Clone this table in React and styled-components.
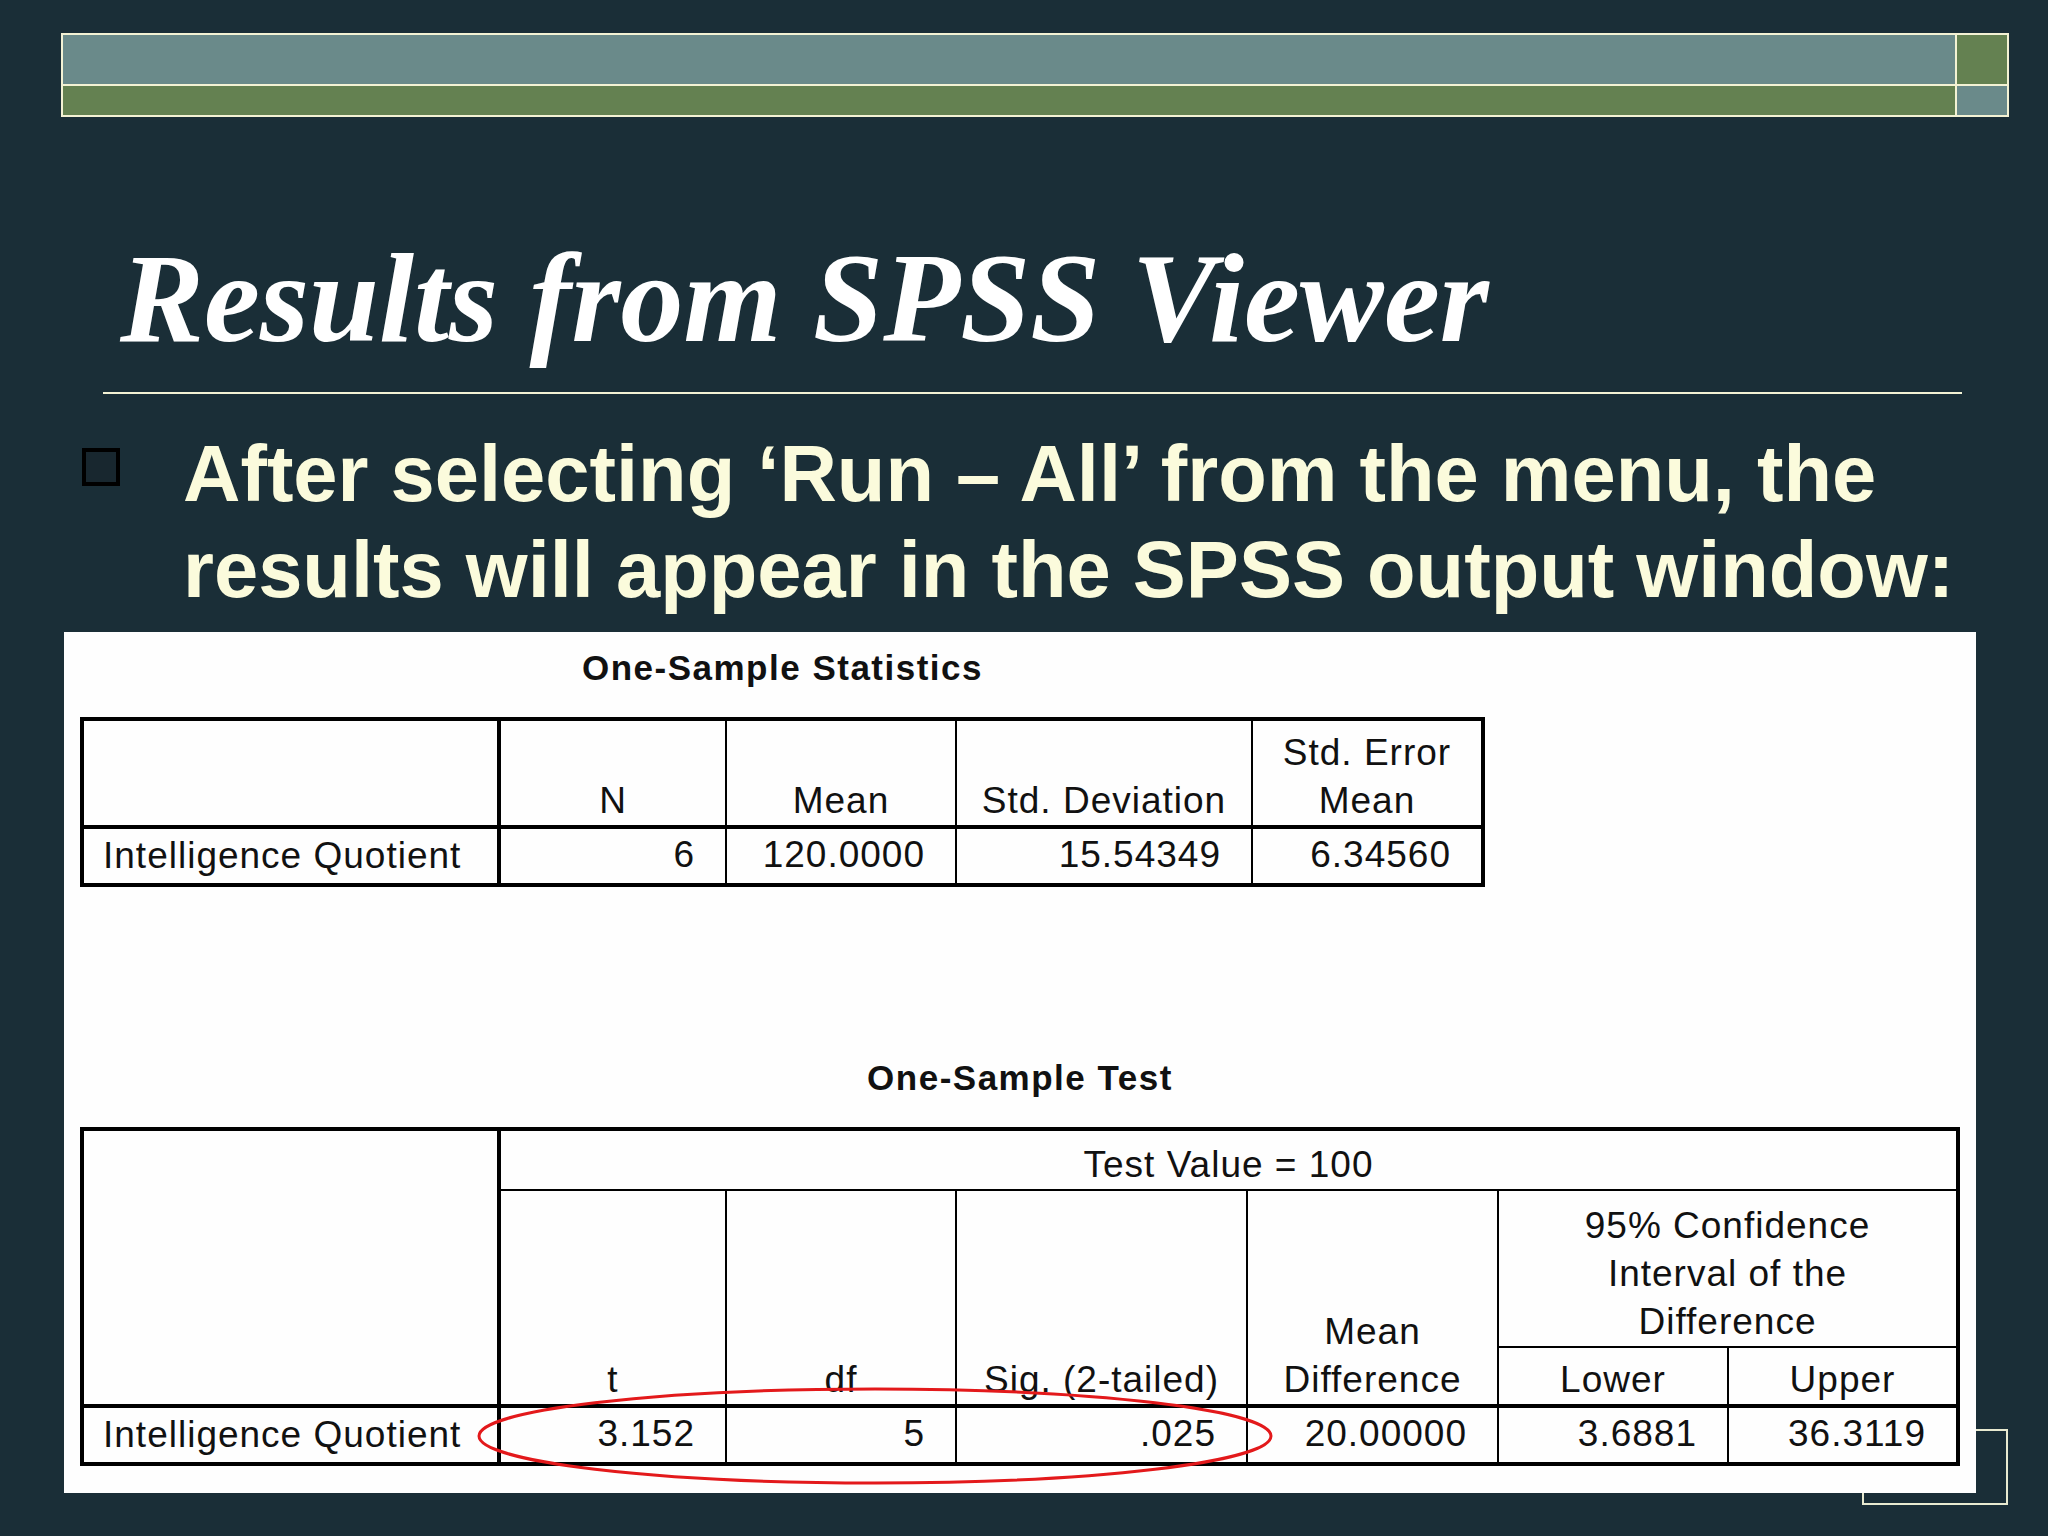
import React from 'react';
import styled, { createGlobalStyle } from 'styled-components';

const GlobalStyle = createGlobalStyle`
  html, body {
    margin: 0;
    padding: 0;
    background: #1a2e37;
  }
`;

const Slide = styled.div`
  position: relative;
  width: 2048px;
  height: 1536px;
  overflow: hidden;
  background: #1a2e37;
`;

const Banner = styled.div`
  box-sizing: border-box;
  margin: 33px 0 0 61px;
  width: 1948px;
  display: grid;
  grid-template-columns: 1fr 50px;
  grid-template-rows: 49px 29px;
  gap: 2px;
  padding: 2px;
  background: #f3f2d4;
`;

const Stripe = styled.div`
  background: ${props => (props.green ? '#648151' : '#6a8a8a')};
`;

const Title = styled.h1`
  margin: 105px 0 0 120px;
  font-family: "Liberation Serif", "Times New Roman", serif;
  font-style: italic;
  font-weight: 700;
  font-size: 126px;
  line-height: 154px;
  color: #ffffff;
  white-space: nowrap;
`;

const Rule = styled.div`
  margin: 16px 0 0 103px;
  width: 1859px;
  height: 2px;
  background: #f3f2d4;
`;

const Bullet = styled.div`
  display: flex;
  align-items: flex-start;
  gap: 63px;
  margin-top: 32px;
  padding-left: 82px;
`;

const BulletMark = styled.span`
  box-sizing: border-box;
  flex: none;
  width: 38px;
  height: 38px;
  margin-top: 22px;
  border: 4px solid #000;
  background: #18272f;
`;

const BulletText = styled.p`
  margin: 0;
  font-family: "Liberation Sans", Arial, sans-serif;
  font-weight: 700;
  font-size: 79.5px;
  line-height: 96px;
  color: #fbfbdc;
  white-space: nowrap;
`;

const Panel = styled.div`
  box-sizing: border-box;
  position: relative;
  z-index: 1;
  margin: 14px 0 0 64px;
  width: 1912px;
  height: 861px;
  padding: 16px 0 0 16px;
  background: #fefefe;
  font-family: "Liberation Sans", Arial, sans-serif;
  color: #111;
`;

const Block = styled.div`
  display: flex;
  flex-direction: column;
  align-items: center;
  width: max-content;
  margin-top: ${props => props.offset || 0}px;
`;

const Caption = styled.div`
  font-weight: 700;
  font-size: 35px;
  line-height: 40px;
  letter-spacing: 1.5px;
  margin-bottom: 29px;
`;

const Table = styled.table`
  border-collapse: collapse;
  table-layout: fixed;
  border: 4px solid #000;
  font-size: 37px;
  letter-spacing: 1px;
  line-height: 48px;
`;

const Head = styled.th`
  font-weight: 400;
  text-align: center;
  vertical-align: bottom;
  padding: 0 4px;
  white-space: nowrap;
  height: ${props => props.h}px;
  border-left: ${props => (props.thick ? 4 : 2)}px solid #000;
  border-top: 2px solid #000;
`;

const Stub = styled.th`
  font-weight: 400;
  text-align: left;
  padding: 0 0 0 19px;
  white-space: nowrap;
  vertical-align: middle;
`;

const Cell = styled.td`
  text-align: right;
  vertical-align: middle;
  padding: 0 30px 2px 0;
  height: 52px;
  white-space: nowrap;
  border-left: ${props => (props.thick ? 4 : 2)}px solid #000;
`;

const DataRow = styled.tr`
  border-top: 4px solid #000;
`;

const Ring = styled.svg`
  position: absolute;
  left: 411px;
  top: 754px;
  overflow: visible;
`;

const Corner = styled.div`
  position: absolute;
  z-index: 0;
  left: 1862px;
  top: 1429px;
  width: 146px;
  height: 76px;
  border: 2px solid #e8ead0;
  box-sizing: border-box;
`;

const StatsTable = () => (
  <Block>
    <Caption>One-Sample Statistics</Caption>
    <Table>
      <colgroup>
        <col style={{ width: 417 }} />
        <col style={{ width: 227 }} />
        <col style={{ width: 230 }} />
        <col style={{ width: 296 }} />
        <col style={{ width: 231 }} />
      </colgroup>
      <thead>
        <tr>
          <Stub as="td" />
          <Head h={104} thick>N</Head>
          <Head h={104}>Mean</Head>
          <Head h={104}>Std. Deviation</Head>
          <Head h={104}>Std. Error<br />Mean</Head>
        </tr>
      </thead>
      <tbody>
        <DataRow>
          <Stub>Intelligence Quotient</Stub>
          <Cell thick>6</Cell>
          <Cell>120.0000</Cell>
          <Cell>15.54349</Cell>
          <Cell>6.34560</Cell>
        </DataRow>
      </tbody>
    </Table>
  </Block>
);

const TestTable = () => (
  <Block offset={171}>
    <Caption>One-Sample Test</Caption>
    <Table>
      <colgroup>
        <col style={{ width: 417 }} />
        <col style={{ width: 227 }} />
        <col style={{ width: 230 }} />
        <col style={{ width: 291 }} />
        <col style={{ width: 251 }} />
        <col style={{ width: 230 }} />
        <col style={{ width: 230 }} />
      </colgroup>
      <thead>
        <tr>
          <Stub as="td" rowSpan={3} />
          <Head h={58} thick colSpan={6}>Test Value = 100</Head>
        </tr>
        <tr>
          <Head h={155} thick rowSpan={2}>t</Head>
          <Head h={155} rowSpan={2}>df</Head>
          <Head h={155} rowSpan={2}>Sig. (2-tailed)</Head>
          <Head h={155} rowSpan={2}>Mean<br />Difference</Head>
          <Head h={155} colSpan={2}>95% Confidence<br />Interval of the<br />Difference</Head>
        </tr>
        <tr>
          <Head h={56}>Lower</Head>
          <Head h={56}>Upper</Head>
        </tr>
      </thead>
      <tbody>
        <DataRow>
          <Stub>Intelligence Quotient</Stub>
          <Cell thick>3.152</Cell>
          <Cell>5</Cell>
          <Cell>.025</Cell>
          <Cell>20.00000</Cell>
          <Cell>3.6881</Cell>
          <Cell>36.3119</Cell>
        </DataRow>
      </tbody>
    </Table>
  </Block>
);

const App = () => (
  <>
    <GlobalStyle />
    <Slide>
      <Corner />
      <Banner>
        <Stripe />
        <Stripe green />
        <Stripe green />
        <Stripe />
      </Banner>
      <Title>Results from SPSS Viewer</Title>
      <Rule />
      <Bullet>
        <BulletMark />
        <BulletText>
          After selecting ‘Run – All’ from the menu, the
          <br />
          results will appear in the SPSS output window:
        </BulletText>
      </Bullet>
      <Panel>
        <StatsTable />
        <TestTable />
        <Ring width="800" height="100" viewBox="0 0 800 100">
          <ellipse cx="400" cy="50" rx="396" ry="47" fill="none" stroke="#e3191b" strokeWidth="3" />
        </Ring>
      </Panel>
    </Slide>
  </>
);

export default App;
